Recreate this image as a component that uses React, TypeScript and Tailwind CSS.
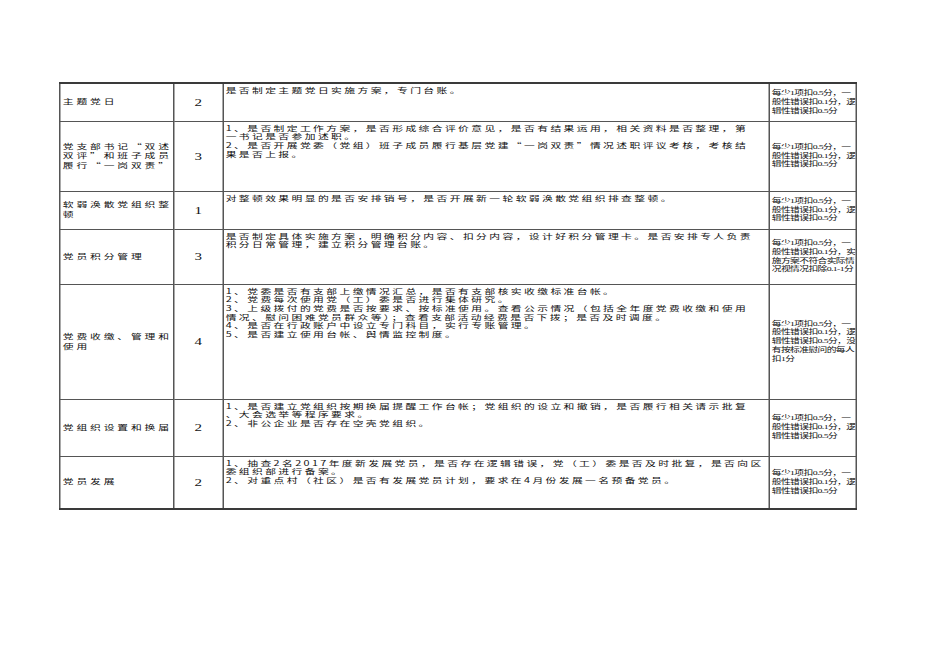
import React from 'react'

type Row = {
  name: string[]
  score: string
  items: string[]
  rule: string[]
  h: number
}

const RULE_A = ['每少1项扣0.5分，一', '般性错误扣0.1分，逻', '辑性错误扣0.5分']

const rows: Row[] = [
  {
    name: ['主题党日'],
    score: '2',
    items: ['是否制定主题党日实施方案，专门台账。'],
    rule: RULE_A,
    h: 38,
  },
  {
    name: ['党支部书记“双述', '双评”和班子成员', '履行“一岗双责”'],
    score: '3',
    items: [
      '1、是否制定工作方案，是否形成综合评价意见，是否有结果运用，相关资料是否整理，第',
      '一书记是否参加述职。',
      '2、是否开展党委（党组）班子成员履行基层党建“一岗双责”情况述职评议考核，考核结',
      '果是否上报。',
    ],
    rule: RULE_A,
    h: 70,
  },
  {
    name: ['软弱涣散党组织整', '顿'],
    score: '1',
    items: ['对整顿效果明显的是否安排销号，是否开展新一轮软弱涣散党组织排查整顿。'],
    rule: RULE_A,
    h: 38,
  },
  {
    name: ['党员积分管理'],
    score: '3',
    items: [
      '是否制定具体实施方案，明确积分内容、扣分内容，设计好积分管理卡。是否安排专人负责',
      '积分日常管理，建立积分管理台账。',
    ],
    rule: ['每少1项扣0.5分，一', '般性错误扣0.1分，实', '施方案不符合实际情', '况视情况扣除0.1-1分'],
    h: 55,
  },
  {
    name: ['党费收缴、管理和', '使用'],
    score: '4',
    items: [
      '1、党委是否有支部上缴情况汇总，是否有支部核实收缴标准台帐。',
      '2、党费每次使用党（工）委是否进行集体研究。',
      '3、上级拨付的党费是否按要求、按标准使用。查看公示情况（包括全年度党费收缴和使用',
      '情况、慰问困难党员群众等）；查看支部活动经费是否下拨；是否及时调度。',
      '4、是否在行政账户中设立专门科目，实行专账管理。',
      '5、是否建立使用台帐、舆情监控制度。',
    ],
    rule: ['每少1项扣0.5分，一', '般性错误扣0.1分，逻', '辑性错误扣0.5分，没', '有按标准慰问的每人', '扣1分'],
    h: 115,
  },
  {
    name: ['党组织设置和换届'],
    score: '2',
    items: [
      '1、是否建立党组织按期换届提醒工作台帐；党组织的设立和撤销，是否履行相关请示批复',
      '、大会选举等程序要求。',
      '2、非公企业是否存在空壳党组织。',
    ],
    rule: RULE_A,
    h: 57,
  },
  {
    name: ['党员发展'],
    score: '2',
    items: [
      '1、抽查2名2017年度新发展党员，是否存在逻辑错误，党（工）委是否及时批复，是否向区',
      '委组织部进行备案。',
      '2、对重点村（社区）是否有发展党员计划，要求在4月份发展一名预备党员。',
    ],
    rule: RULE_A,
    h: 53,
  },
]

export default function App() {
  return (
    <div className="min-h-screen w-[950px] bg-white pl-[59px] pt-[82px] text-[#111]">
      {/* the source page is rendered stretched sideways, so the whole sheet is scaled on x */}
      <div className="w-[531px] origin-left scale-x-[1.5]">
        <table className="w-[531px] table-fixed border-collapse border-y-2 border-x-[1.4px] border-[#3a3a3a] font-['Noto_Sans_CJK_SC',sans-serif]">
          <colgroup>
            <col className="w-[76px]" />
            <col className="w-[32.6px]" />
            <col className="w-[364.6px]" />
            <col className="w-[57.8px]" />
          </colgroup>
          <tbody>
            {rows.map((row, i) => (
              <tr key={i} style={{ height: row.h }}>
                <td className="overflow-hidden border border-[#555] px-[1.5px] align-middle text-[7.2px] leading-[9.6px] tracking-[1.9px] whitespace-nowrap">
                  {row.name.map((t) => (
                    <div key={t}>{t}</div>
                  ))}
                </td>
                <td className="border border-[#555] text-center align-middle font-['Liberation_Serif',serif] text-[10px]">
                  {row.score}
                </td>
                <td className="overflow-hidden border border-[#555] px-[1.5px] pt-[2px] align-top text-[7.2px] leading-[8.7px] tracking-[1.6px] whitespace-nowrap">
                  {row.items.map((t) => (
                    <div key={t}>{t}</div>
                  ))}
                </td>
                <td className="overflow-hidden border border-[#555] px-[1px] align-middle font-['Liberation_Serif','Noto_Sans_CJK_SC',serif] text-[6.5px] leading-[8.7px] tracking-[-0.4px] whitespace-nowrap">
                  {row.rule.map((t) => (
                    <div key={t}>{t}</div>
                  ))}
                </td>
              </tr>
            ))}
          </tbody>
        </table>
      </div>
    </div>
  )
}
